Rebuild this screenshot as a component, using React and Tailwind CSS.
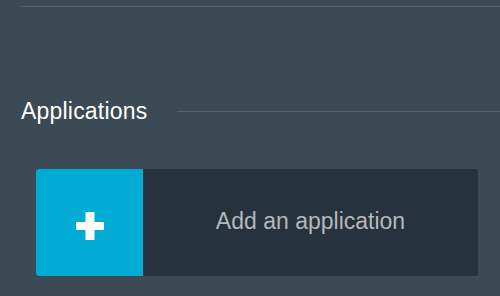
import React from 'react';

const App = () => {
    return (
        <div className="w-[500px] h-[296px] overflow-hidden bg-[#3b4a54] pl-[21px] pt-[6px] font-['Liberation_Sans',Arial,sans-serif]">

            {/* ── Top divider ── */}
            <div className="h-px bg-[#4f5f69]" />

            {/* ── Section header ── */}
            <div className="mt-[90px] flex items-center gap-[30px]">
                <h2 className="text-[23px] leading-[28px] text-white tracking-[0.2px]">Applications</h2>
                <div className="flex-1 h-px bg-[#56656f]" />
            </div>

            {/* ── Add card ── */}
            <button className="mt-[44px] ml-[15px] w-[442px] h-[107px] flex rounded-[3px] overflow-hidden bg-[#26323d]">
                <div className="w-[107px] h-full bg-[#00acd4] flex items-center justify-center pt-[6px]">
                    <svg width="28" height="28" viewBox="0 0 28 28">
                        <rect x="9.5" y="0" width="9" height="28" fill="#fff" />
                        <rect x="0" y="10" width="28" height="8" fill="#fff" />
                    </svg>
                </div>
                <div className="flex-1 flex items-center justify-center pb-[2px]">
                    <span className="text-[23px] text-[#b3b8bc]">Add an application</span>
                </div>
            </button>
        </div>
    );
};

export default App;
